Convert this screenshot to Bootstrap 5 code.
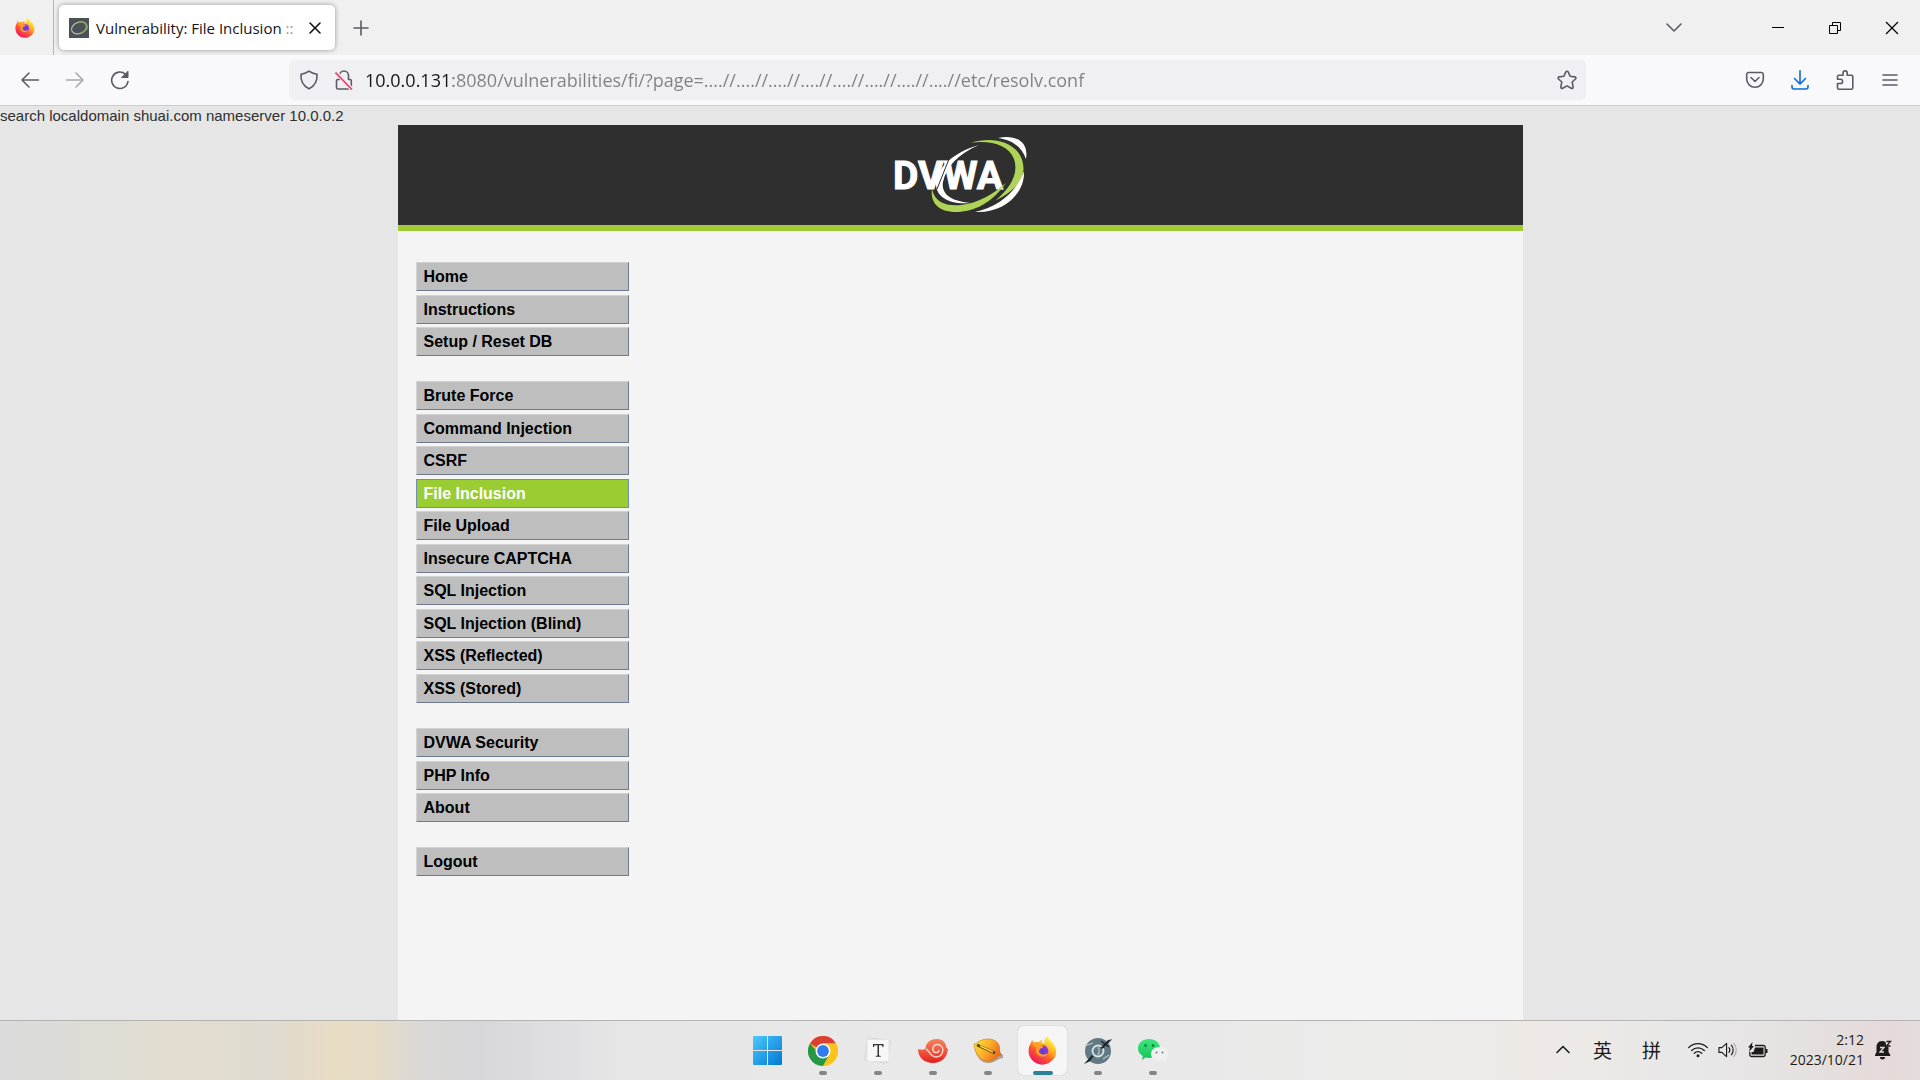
<!DOCTYPE html>
<html lang="en">
<head>
<meta charset="utf-8">
<meta name="viewport" content="width=device-width, initial-scale=1">
<title>Vulnerability: File Inclusion :: DVWA</title>
<link href="https://cdn.jsdelivr.net/npm/bootstrap@5.3.0/dist/css/bootstrap.min.css" rel="stylesheet">
<style>
  :root { --ui: "Open Sans", "Noto Sans", "Noto Sans CJK SC", sans-serif; --ink: #5b5b66; }
  body { font-family: var(--ui); background: #e6e6e6; }
  svg { display: block; flex: none; }
  button { border: 0; background: none; padding: 0; color: var(--ink); display: flex; align-items: center; justify-content: center; flex: none; }
  .stroke { fill: none; stroke: currentColor; stroke-width: 1.6; stroke-linecap: round; stroke-linejoin: round; }

  .tab-strip { height: 55px; background: #f0f0f0; }
  .pinned { width: 54px; padding-right: 4px; border-right: 1px solid #b4b4b4; }
  .page-tab { width: 276px; height: 45px; margin-left: 5px; padding: 0 10px; border-radius: 5px; background: #fff; box-shadow: 0 0 5px rgba(0,0,0,.38); }
  .tab-title { font-size: 15px; line-height: 20px; color: #15141a; margin-left: 7px; white-space: nowrap; }
  .tab-title span { color: #96969a; }
  .tab-close { width: 20px; height: 20px; color: #15141a; }
  .new-tab { width: 51px; height: 45px; }
  .list-tabs { width: 45px; height: 45px; margin-right: 53px; }
  .win-btn { width: 57px; height: 54px; color: #000; }

  .tool-bar { height: 51px; background: #f9f9fb; border-bottom: 1px solid #ccccd0; padding: 0 8px 0 7px; }
  .tool-btn { width: 45px; height: 40px; }
  .url-box { height: 40px; margin: 0 146px 0 147px; padding: 0 9px 0 10px; border-radius: 5px; background: #f0f0f4; color: var(--ink); }
  .url-input { border: 0; outline: 0; padding: 0; margin-left: 12px; font-size: 18px; line-height: 24px; color: #808084;
    background: linear-gradient(to right, #15141a 88px, #808084 88px); -webkit-background-clip: text; background-clip: text; -webkit-text-fill-color: transparent; }

  .site { font-family: "Liberation Sans", Arial, sans-serif; color: #2f2f2f; min-height: 0; }
  .leak { font-size: 15px; line-height: 19px; }
  .dvwa { width: 100%; max-width: 1125px; background: #f4f4f4; min-height: 0; }
  .dvwa-head { height: 106px; background: #2f2f2f; border-bottom: 6px solid #a1cc33; }
  .side-menu { width: 213px; margin: 31px 0 0 18px; }
  .side-menu ul { margin-bottom: 25px; }
  .side-menu li { margin-bottom: 4px; }
  .side-menu li:nth-child(even) { margin-bottom: 3px; }
  .side-menu a { display: block; height: 29px; padding: 0 7px; font-size: 16px; line-height: 27px; font-weight: 700; color: #000; text-decoration: none;
    background: #bebebe; border: 1px solid; border-color: #d2d2d2 #6e7b8f #6e7b8f #d2d2d2; }
  .side-menu a.active { background: #9acd32; color: #fff; border-color: #708db4; }

  .task-bar { height: 60px; border-top: 1px solid #b4b4b4;
    background: linear-gradient(to right, #dadbdb 0, #dddcd5 90px, #e2ddcf 170px, #e0dbd0 270px, #e8dcc4 335px, #e7dcc6 370px, #dad9d6 420px, #d7d7da 480px, #e6e6e7 620px, #e9e9e9 900px, #e9e9e9 1200px, #ececeb 1400px, #eee9e5 1530px, #e8e8e9 1700px, #e4dfdd 1830px, #e6dad9 1890px, #e3dddc 100%); }
  .apps { gap: 6px; }
  .app-btn { width: 49px; height: 49px; border-radius: 5px; position: relative; }
  .app-btn.current { background: #f5f5f5; box-shadow: 0 0 1px #999; }
  .running::after { content: ""; position: absolute; bottom: 0; left: 50%; width: 8px; height: 4px; margin-left: -4px; border-radius: 2px; background: #858585; }
  .running.current::after { width: 20px; margin-left: -10px; background: #2a8296; }
  .tray { color: #1b1b1b; padding: 0 26px 2px 0; }
  .tray button { color: #1b1b1b; }
  .tray-icons { gap: 10px; margin-left: 12px; }
  .ime { width: 49px; height: 40px; font-family: "Noto Sans CJK SC", sans-serif; font-size: 19px; line-height: 24px; }
  .clock { font-size: 14px; line-height: 20px; text-align: right; width: 96px; }
</style>
</head>
<body class="vh-100 d-flex flex-column overflow-hidden">
<svg width="0" height="0" class="position-absolute" aria-hidden="true">
  <defs>
    <linearGradient id="fxBody" x1=".8" y1=".1" x2=".25" y2=".95"><stop offset="0" stop-color="#fff44f"/><stop offset=".35" stop-color="#ffb01f"/><stop offset=".62" stop-color="#ff5a30"/><stop offset="1" stop-color="#ee1560"/></linearGradient>
    <radialGradient id="fxCore"><stop offset="0" stop-color="#5b3fc8"/><stop offset="1" stop-color="#9a35e6"/></radialGradient>
    <symbol id="firefox" viewBox="0 0 32 32">
      <path fill="url(#fxBody)" d="M3 8c.5-2 1.500-3 2-3.500.2 1.500.8 2.500 1.500 3C8 6.500 10 6.500 11.500 7c1-1.600 3-2.800 4.500-3-1 1.500-1 2.500-.5 3.500l3 .5C17 5 19 1.500 21.500 0c.5 3 3 4.500 5 7 .8-.2 1.300.8 1.500 1.800 4 5.500 4.500 12-.5 17.500C21 33.500 10 33.500 4 26 0 21-.5 13.500 3 8z"/>
      <circle cx="16" cy="16.500" r="6.500" fill="url(#fxCore)"/>
      <path fill="#ff9d25" d="M5 9c2-2.500 5-2.500 7-1.500-.5 1 0 2 1 2.500l4 1c0 2-3 2.500-4 3.500-1.500 2-1 4.500 1.500 5.500 3 1 5-.5 7-.5-1 3-5.500 4.500-9 2.500C8 20 8 15 10 12.500 8 12 6 12 5 9z"/>
    </symbol>
    <linearGradient id="winFill" x1="0" y1="0" x2="1" y2="1"><stop offset="0" stop-color="#4cc9fb"/><stop offset="1" stop-color="#0277d4"/></linearGradient>
    <linearGradient id="shellFill" x1="0" y1="0" x2="0" y2="1"><stop offset="0" stop-color="#f5805c"/><stop offset=".5" stop-color="#f05840"/><stop offset="1" stop-color="#e3201f"/></linearGradient>
    <linearGradient id="leafFill" x1="0" y1=".2" x2="1" y2=".7"><stop offset="0" stop-color="#ffe329"/><stop offset=".5" stop-color="#fba929"/><stop offset="1" stop-color="#e8601a"/></linearGradient>
    <linearGradient id="chatFill" x1="0" y1="0" x2="0" y2="1"><stop offset="0" stop-color="#3ee57b"/><stop offset="1" stop-color="#13c45d"/></linearGradient>
  </defs>
</svg>

<header>
  <div class="tab-strip d-flex align-items-center">
    <button class="pinned h-100" type="button" aria-label="Firefox"><svg width="20" height="20"><use href="#firefox"/></svg></button>
    <div class="page-tab d-flex align-items-center">
      <svg width="20" height="20" viewBox="0 0 20 20"><rect width="20" height="20" fill="#4b5156"/><ellipse cx="10.300" cy="10" rx="8" ry="5.600" transform="rotate(-20 10 10)" fill="none" stroke="#b4b8b4" stroke-width="1.300"/><path d="M9 4.300c5-1.500 9 1 8.300 5-.6 3-3 5-6 6" fill="none" stroke="#8da052" stroke-width="1.300"/></svg>
      <div class="tab-title">Vulnerability: File Inclusion <span>::</span></div>
      <button class="tab-close ms-auto" type="button" aria-label="Close tab"><svg class="stroke" width="12" height="12" viewBox="0 0 12 12"><path d="M1 1l10 10M11 1L1 11"/></svg></button>
    </div>
    <button class="new-tab" type="button" aria-label="New tab"><svg class="stroke" width="16" height="16" viewBox="0 0 16 16"><path d="M8 1v14M1 8h14"/></svg></button>
    <button class="list-tabs ms-auto" type="button" aria-label="List all tabs"><svg class="stroke" width="16" height="10" viewBox="0 0 16 10"><path d="M1 1l7 7 7-7"/></svg></button>
    <button class="win-btn" type="button" aria-label="Minimize"><svg width="12" height="12" viewBox="0 0 12 12"><path d="M0 5.500h12" stroke="#000"/></svg></button>
    <button class="win-btn" type="button" aria-label="Restore"><svg width="12" height="12" viewBox="0 0 12 12"><path d="M.5 3.500h8v8h-8zM3.500 3.500v-3h8v8h-3" fill="none" stroke="#000"/></svg></button>
    <button class="win-btn" type="button" aria-label="Close"><svg width="14" height="14" viewBox="0 0 14 14"><path d="M1 1l12 12M13 1L1 13" stroke="#000" stroke-width="1.200"/></svg></button>
  </div>

  <div class="tool-bar d-flex align-items-center">
    <button class="tool-btn" type="button" aria-label="Back"><svg class="stroke" width="20" height="20" viewBox="0 0 20 20"><path d="M18.500 10H2M9 3l-7 7 7 7"/></svg></button>
    <button class="tool-btn opacity-50" type="button" aria-label="Forward"><svg class="stroke" width="20" height="20" viewBox="0 0 20 20"><path d="M1.500 10H18M11 3l7 7-7 7"/></svg></button>
    <button class="tool-btn" type="button" aria-label="Reload"><svg class="stroke" width="20" height="20" viewBox="0 0 20 20"><path d="M18 11.500A8.200 8.200 0 1 1 15.500 4.300"/><path d="M18 1.500v6h-6z" fill="currentColor" stroke-width="1"/></svg></button>
    <div class="url-box d-flex align-items-center flex-grow-1">
      <svg class="stroke" width="20" height="20" viewBox="0 0 20 20"><path d="M10 1.200c2.300 1.800 5 2.600 8 3 .4 5.800-1.800 11.500-8 14.600C3.800 15.700 1.600 10 2 4.200c3-.4 5.700-1.200 8-3z"/></svg>
      <svg class="ms-3" width="18" height="20" viewBox="0 0 18 20"><g class="stroke"><path d="M4.500 9.500V5.500a4.500 4.500 0 0 1 9 0v4H15a1.300 1.300 0 0 1 1.300 1.300V18a1 1 0 0 1-1 1H3a1.500 1.500 0 0 1-1.500-1.500V11A1.500 1.500 0 0 1 3 9.500z"/></g><path d="M1 2.500l16 17" stroke="#f0f0f4" stroke-width="4"/><path d="M.5 2.500l16.500 17" stroke="#ef4069" stroke-width="1.700"/></svg>
      <input class="url-input flex-grow-1" type="text" aria-label="Address" spellcheck="false" value="10.0.0.131:8080/vulnerabilities/fi/?page=....//....//....//....//....//....//....//....//etc/resolv.conf">
      <button type="button" aria-label="Bookmark this page"><svg class="stroke" width="20" height="20" viewBox="0 0 20 20"><path d="M10 1.200c.6 0 1 .3 1.300.9l1.900 4.200 4.600.6c1.200.2 1.500 1.300.7 2.100L15.200 12l.9 4.900c.2 1.200-.8 1.900-1.800 1.300L10 15.900l-4.300 2.300c-1 .6-2-.1-1.800-1.300l.9-4.900L1.500 9c-.8-.8-.5-1.900.7-2.100l4.600-.6 1.900-4.200c.3-.6.700-.9 1.300-.9z"/></svg></button>
    </div>
    <button class="tool-btn" type="button" aria-label="Save to Pocket"><svg class="stroke" width="20" height="20" viewBox="0 0 20 20"><path d="M3.500 2.500h13A2 2 0 0 1 18.300 4.300V9a8.300 8.300 0 0 1-16.600 0V4.300A2 2 0 0 1 3.500 2.500z"/><path d="M6 7.500l4 4 4-4"/></svg></button>
    <button class="tool-btn" type="button" aria-label="Downloads"><svg class="stroke" width="18" height="20" viewBox="0 0 18 20"><path stroke="#0a6be0" d="M9 .8v13M3.500 8.500L9 14l5.500-5.500M1 15.500V17a2 2 0 0 0 2 2h12a2 2 0 0 0 2-2v-1.500"/></svg></button>
    <button class="tool-btn" type="button" aria-label="Extensions"><svg class="stroke" width="20" height="20" viewBox="0 0 20 20"><path d="M8 5V3a2 2 0 0 1 4.200 0v2.200h4.300A1.300 1.300 0 0 1 17.800 6.500v11.300a1.400 1.400 0 0 1-1.400 1.400H4a1.500 1.500 0 0 1-1.500-1.500v-4.200h3a2 2 0 0 0 0-4.200h-3V6.800A1.500 1.500 0 0 1 4 5.300h4z"/></svg></button>
    <button class="tool-btn" type="button" aria-label="Menu"><svg class="stroke" width="16" height="12" viewBox="0 0 16 12"><path d="M1 1h14M1 6h14M1 11h14"/></svg></button>
  </div>
</header>

<main class="site flex-grow-1 d-flex flex-column overflow-hidden">
  <div class="leak">search localdomain shuai.com nameserver 10.0.0.2</div>
  <div class="dvwa mx-auto flex-grow-1">
    <div class="dvwa-head d-flex justify-content-center align-items-center">
      <svg width="140" height="86" viewBox="0 0 140 86" role="img" aria-label="DVWA">
        <path fill="#fff" d="M89 13C64 20 46 36 46 52c0 13 14 21 34 19C61 69 51 62 53 50 56 35 68 22 89 13z"/>
        <text x="3" y="57" font-family="Roboto, sans-serif" font-weight="700" font-size="39" fill="#fff" stroke="#fff">DVWA</text>
        <path d="M59 27L47 57" stroke="#2f2f2f" stroke-width="1"/>
        <path fill="#afd357" d="M81 10.500C106 3 133.500 12 133.500 37c-.5 14-13 24-28 31.500C120 56 129 42 124 27 119 13 101 8 81 10.500z"/>
        <path fill="#afd357" d="M42 57c3 14 15 17.500 29 16 17-2 31-10 45-22C102 71 84 80 66 80 49 80 40 71 42 57z"/>
        <path fill="#fff" d="M108 6c18-4 31 4 28 21C131 14 122 8 108 6z"/>
        <path fill="#fff" d="M134 39.500c1 21-19 42-49 40.500 22-5 40-18 49-40.500z"/>
      </svg>
    </div>
    <nav class="side-menu" aria-label="DVWA">
      <ul class="list-unstyled"><li><a href="#">Home</a></li><li><a href="#">Instructions</a></li><li><a href="#">Setup / Reset DB</a></li></ul>
      <ul class="list-unstyled">
        <li><a href="#">Brute Force</a></li><li><a href="#">Command Injection</a></li><li><a href="#">CSRF</a></li>
        <li><a href="#" class="active" aria-current="page">File Inclusion</a></li><li><a href="#">File Upload</a></li><li><a href="#">Insecure CAPTCHA</a></li>
        <li><a href="#">SQL Injection</a></li><li><a href="#">SQL Injection (Blind)</a></li><li><a href="#">XSS (Reflected)</a></li><li><a href="#">XSS (Stored)</a></li>
      </ul>
      <ul class="list-unstyled"><li><a href="#">DVWA Security</a></li><li><a href="#">PHP Info</a></li><li><a href="#">About</a></li></ul>
      <ul class="list-unstyled"><li><a href="#">Logout</a></li></ul>
    </nav>
  </div>
</main>

<footer class="task-bar d-flex align-items-center flex-shrink-0">
  <div class="col"></div>
  <div class="apps d-flex">
    <button class="app-btn" type="button" aria-label="Start"><svg width="29" height="29" viewBox="0 0 29 29"><path fill="url(#winFill)" d="M1 0h13v14H0V1a1 1 0 0 1 1-1zM15 0h13a1 1 0 0 1 1 1v13H15zM0 15h14v14H1a1 1 0 0 1-1-1zM15 15h14v13a1 1 0 0 1-1 1H15z"/></svg></button>
    <button class="app-btn running" type="button" aria-label="Chrome"><svg width="30" height="30" viewBox="0 0 30 30"><circle cx="15" cy="15" r="15" fill="#fcc31c"/><path d="M15 15L2 7.500A15 15 0 0 1 28 7.500H15z" fill="#dd4032"/><path d="M15 15H8.500L2 7.500A15 15 0 0 0 15 30l6.500-11.300z" fill="#249847"/><path d="M15 7.500h13A15 15 0 0 1 15 30l6.500-11.300z" fill="#fcc31c"/><circle cx="15" cy="15" r="7.500" fill="#fff"/><circle cx="15" cy="15" r="5.900" fill="#2f7cee"/></svg></button>
    <button class="app-btn running" type="button" aria-label="Typora"><svg width="28" height="28" viewBox="0 0 28 28"><rect x="2" y="2" width="23" height="23" rx="2" fill="#eee" stroke="#d5d5d5" transform="rotate(7 14 14)"/><rect x="3" y="2.500" width="22" height="22" rx="1" fill="#f7f7f7" stroke="#e3e3e3"/><path d="M9 7h10.500v3h-1l-.5-1.800h-3v10.300l1.800.6v.7h-5v-.7l1.700-.6V8.200h-3L10 10H9z" fill="#333"/></svg></button>
    <button class="app-btn running" type="button" aria-label="Xshell"><svg width="30" height="26" viewBox="0 0 30 26"><path fill="url(#shellFill)" d="M0 11c3 1 6 1 7.500-.5C8 4 13 1 19 1c5 0 9 3 9.500 9L30 11c-1 9-7 14-15 14C7 25 0 20 0 11z"/><path d="M8 11c4 2 4 8 10 8 7 0 9-9 4-12-5-2-8 2-7 5 1 4 6 3 6 0" fill="none" stroke="#fbd9cc" stroke-width="1.400"/></svg></button>
    <button class="app-btn running" type="button" aria-label="Xftp"><svg width="30" height="26" viewBox="0 0 30 26"><path d="M2 8c3 0 3-4 7-5 8-4 18 0 18 7 0 5 1 6 3 7v3c-4 0-7 4-13 5C8 26 2 18 2 8z" fill="#6e4a2a" opacity=".45"/><path d="M1 6c3 0 4-3 8-4 9-3 17 1 17 7 0 4 1 7 3 8-5 0-6 5-12 6C7 24 2 16 1 6z" fill="url(#leafFill)" stroke="#c97719" stroke-width=".6"/><path d="M4 7l18 8" stroke="#573b12" stroke-width="2.600"/><path d="M7 8l13 6" stroke="#f6d63a" stroke-width="1.500"/></svg></button>
    <button class="app-btn running current" type="button" aria-label="Firefox"><svg width="29" height="29"><use href="#firefox"/></svg></button>
    <button class="app-btn running" type="button" aria-label="Database client"><svg width="28" height="28" viewBox="0 0 28 28"><circle cx="14" cy="14" r="13" fill="#607984"/><circle cx="14" cy="14" r="5.500" fill="none" stroke="#dde4e6" stroke-width="1.800"/><path d="M13.500 11h1.500v6h-2M1 9l8-3M19 22l6-4" stroke="#b9c5ca" stroke-width="1.200" fill="none"/><path d="M0 27L8 18l1.500 1.500-4 5zM16 11L27 2l.7.7-9 9z" fill="#20262a"/><path d="M17 4l8 6M19 9l6-6" stroke="#20262a" stroke-width="1.300"/></svg></button>
    <button class="app-btn running" type="button" aria-label="WeChat"><svg width="30" height="26" viewBox="0 0 30 26"><path d="M11 1c6.500 0 11 4 11 9.500S17.500 20 11 20c-1.300 0-2.500-.1-3.500-.4L4 22l.8-4C1.800 16 0 14 0 10.500 0 5 4.500 1 11 1z" fill="url(#chatFill)"/><circle cx="7.500" cy="7.500" r="1.300" fill="#146f3a"/><circle cx="15" cy="7.500" r="1.300" fill="#146f3a"/><path d="M21.500 9c5 0 8.500 3 8.500 7 0 2.500-1 4-3 5.300l.5 2.500-2.800-1.500c-7 1.700-11.700-2-11.700-6.300 0-4 3.500-7 8.500-7z" fill="#f0f0f0"/><circle cx="18.500" cy="14.500" r="1" fill="#777"/><circle cx="24.500" cy="14.500" r="1" fill="#777"/></svg></button>
  </div>
  <div class="col d-flex justify-content-end">
    <div class="tray d-flex align-items-center">
      <button class="me-2" type="button" aria-label="Show hidden icons"><svg class="stroke" width="14" height="9" viewBox="0 0 14 9"><path d="M1 7.500l6-6 6 6"/></svg></button>
      <button class="ime" type="button">英</button>
      <button class="ime" type="button">拼</button>
      <button class="tray-icons" type="button" aria-label="Network, volume and battery">
        <svg class="stroke" width="20" height="16" viewBox="0 0 20 16"><path stroke-width="1.300" d="M.8 5.500a13 13 0 0 1 18.400 0M3.700 8.500a9 9 0 0 1 12.600 0M6.300 11.200a5.300 5.300 0 0 1 7.400 0"/><circle cx="10" cy="13.800" r="1.500" fill="currentColor" stroke="none"/></svg>
        <svg class="stroke" width="20" height="16" viewBox="0 0 21 16"><g stroke-width="1.200"><path d="M1 5.500h3L9 1v14l-5-4.500H1zM11.500 5.500a4 4 0 0 1 0 5M14 3a7.500 7.500 0 0 1 0 10"/><path d="M16.500 1a10.500 10.500 0 0 1 0 14" opacity=".3"/></g></svg>
        <svg width="20" height="16" viewBox="0 0 20 16"><path d="M7 3.500h8.500A1.700 1.700 0 0 1 17.200 5.200v7.600a1.700 1.700 0 0 1-1.700 1.700H3.500A1.700 1.700 0 0 1 1.800 12.800V10" fill="none" stroke="#1b1b1b" stroke-width="1.300"/><path d="M7 5.500h8.500v7h-12V10h2zM18 7h1.500v4H18zM4.500 0L0 5.500h2L1 10l5-6H4z" fill="#1b1b1b"/></svg>
      </button>
      <div class="clock"><div>2:12</div><div>2023/10/21</div></div>
      <button type="button" aria-label="Notifications" class="ms-2"><svg width="22" height="20" viewBox="0 0 22 20"><path fill="#1b1b1b" d="M10 1c4 0 6.500 2.800 6.500 6.500V12l1.800 3v1H3v-1l1.500-3V7.500C4.500 4 6 1 10 1zM8 17h5a2.500 2.500 0 0 1-5 0z"/><path d="M8 7.500h4l-4 4.500h4" fill="none" stroke="#e6dcdb" stroke-width="1.300"/><path d="M13 0h6v6.500h-4.500z" fill="#e6dcdb"/><path d="M14.500 1.500h4l-4 4.500h4" fill="none" stroke="#1b1b1b" stroke-width="1.300"/></svg></button>
    </div>
  </div>
</footer>
<script src="https://cdn.jsdelivr.net/npm/bootstrap@5.3.0/dist/js/bootstrap.bundle.min.js"></script>
</body>
</html>
